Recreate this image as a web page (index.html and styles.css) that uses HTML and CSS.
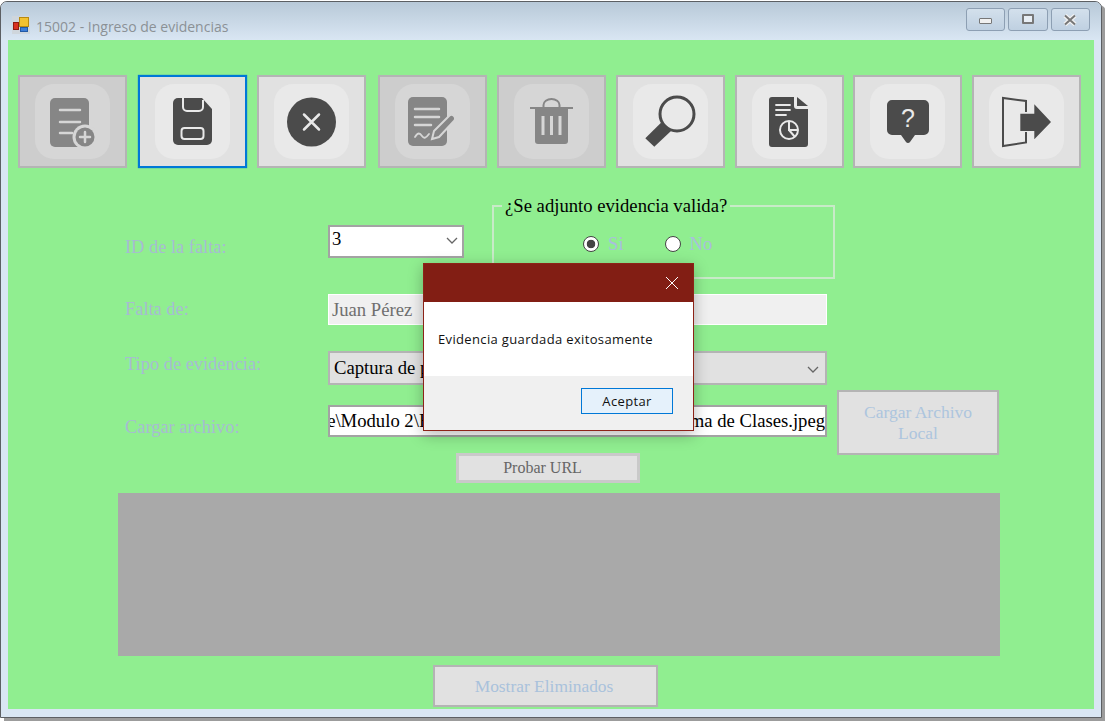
FILE: index.html
```html
<!DOCTYPE html>
<html lang="es">
  <head>
    <meta charset="UTF-8" />
    <title>15002 - Ingreso de evidencias</title>
    <link rel="stylesheet" href="styles.css">
  </head>
  <body>
    <div class="window">
      <div class="titlebar">
        <svg class="app-icon" width="18" height="18" viewBox="0 0 18 18">
          <rect x="0" y="0" width="18" height="18" fill="#cfd6dc" />
          <rect x="7.500" y="1.500" width="9" height="9" fill="#f2c230" stroke="#b98a10" />
          <rect x="1.500" y="6.500" width="5" height="7" fill="#d8301f" stroke="#8e1a10" />
          <rect x="8.500" y="11.500" width="7" height="4" fill="#3d7fd8" stroke="#235aa5" />
        </svg>
        <span class="title">15002 - Ingreso de evidencias</span>
        <div class="win-buttons">
          <div class="win-btn"><span class="glyph-min"></span></div>
          <div class="win-btn"><span class="glyph-max"></span></div>
          <div class="win-btn">
            <svg width="14" height="12" viewBox="0 0 14 12"><path d="M2 1.500 L12 10.500 M12 1.500 L2 10.500" stroke="#f2f2f2" stroke-width="4.400" /><path d="M2 1.500 L12 10.500 M12 1.500 L2 10.500" stroke="#777" stroke-width="2" /></svg>
          </div>
        </div>
      </div>

      <div class="client">
        <div class="toolbar">
          <button class="tool off" disabled>
            <svg class="tile" viewBox="0 0 75 75">
              <rect x="15" y="14" width="39" height="49" rx="5" class="ink" />
              <path d="M25 26H45M25 38H45M25 49H37" class="line" />
              <circle cx="50" cy="53" r="12.500" class="paper" />
              <circle cx="50" cy="53" r="9.500" class="ink" />
              <path d="M45 53H55M50 48V58" class="line" />
            </svg>
          </button>
          <button class="tool focus">
            <svg class="tile" viewBox="0 0 75 75">
              <path d="M23 14H47L57 25V56a5 5 0 0 1-5 5H23a5 5 0 0 1-5-5V19a5 5 0 0 1 5-5Z" class="ink" />
              <path d="M28 14V23a4 4 0 0 0 4 4H44a4 4 0 0 0 4-4V16" class="outline" />
              <rect x="26.500" y="44" width="22" height="11" rx="3" class="outline" />
            </svg>
          </button>
          <button class="tool">
            <svg class="tile" viewBox="0 0 75 75">
              <circle cx="37.500" cy="38" r="24.500" class="ink" />
              <path d="M30 30.500L45 45.500M45 30.500L30 45.500" class="line" />
            </svg>
          </button>
          <button class="tool off">
            <svg class="tile" viewBox="0 0 75 75">
              <rect x="13" y="13" width="39" height="49" rx="5" class="ink" />
              <path d="M20 25H44M20 33H44M20 41H36" class="line" />
              <path d="M20 53C23 48 25 49 27 52S31 54 34 50" class="line thin" />
              <path d="M39 47L54 32a3.500 3.500 0 0 1 5 5L44 53L37 55Z" class="ink outline-fill" />
            </svg>
          </button>
          <button class="tool off">
            <svg class="tile" viewBox="0 0 75 75">
              <path d="M29.500 24V21a8 6 0 0 1 16 0V24" class="outline dark" />
              <path d="M16 24H59" class="outline dark" />
              <path d="M21 25H54V57a3 3 0 0 1-3 3H24a3 3 0 0 1-3-3Z" class="ink" />
              <path d="M29 32V51M37.500 32V51M46 32V51" class="line flat" />
            </svg>
          </button>
          <button class="tool">
            <svg class="tile" viewBox="0 0 75 75">
              <circle cx="44" cy="30" r="17" class="outline dark wide" />
              <path d="M12.300 54.300L21.300 62.700L38 47L28 38.700Z" class="ink" />
            </svg>
          </button>
          <button class="tool">
            <svg class="tile" viewBox="0 0 75 75">
              <path d="M20 13H42V22a3 3 0 0 0 3 3H56V60a3 3 0 0 1-3 3H20a3 3 0 0 1-3-3V16a3 3 0 0 1 3-3Z" class="ink" />
              <path d="M45 13L56 22H45Z" class="ink" />
              <path d="M24 21H38M24 26H38M24 31H34" class="line thin" />
              <circle cx="37" cy="46" r="9" class="outline" />
              <path d="M37 37V46H46M37 46L43 53" class="outline" />
            </svg>
          </button>
          <button class="tool">
            <svg class="tile" viewBox="0 0 75 75">
              <path d="M22 16H54a5 5 0 0 1 5 5V46a5 5 0 0 1-5 5H45L40 58a2.500 2.500 0 0 1-4 0L31 51H22a5 5 0 0 1-5-5V21a5 5 0 0 1 5-5Z" class="ink" />
              <text x="38" y="43" class="help-mark">?</text>
            </svg>
          </button>
          <button class="tool">
            <svg class="tile" viewBox="0 0 75 75">
              <path d="M37 28V17L14 14V62L37 58.500V48" class="outline dark" />
              <path d="M31.300 29.700H45.300V20.300L62 38L45.300 55.300V47H31.300Z" class="ink" />
            </svg>
          </button>
        </div>

        <div class="row row-id">
          <label class="field-label label-id">ID de la falta:</label>
          <div class="combo combo-id"><span>3</span>
            <svg class="chevron" width="12" height="7" viewBox="0 0 12 7"><path d="M1 1L6 6L11 1" /></svg>
          </div>
          <fieldset class="valid-box">
            <legend>¿Se adjunto evidencia valida?</legend>
            <div class="radios">
              <label class="radio"><input type="radio" name="valida" checked />Si</label>
              <label class="radio"><input type="radio" name="valida" />No</label>
            </div>
          </fieldset>
        </div>

        <div class="row row-name">
          <label class="field-label">Falta de:</label>
          <div class="readonly">Juan Pérez</div>
        </div>

        <div class="row row-type">
          <label class="field-label label-type">Tipo de evidencia:</label>
          <div class="combo combo-type"><span>Captura de pantalla</span>
            <svg class="chevron" width="12" height="7" viewBox="0 0 12 7"><path d="M1 1L6 6L11 1" /></svg>
          </div>
        </div>

        <div class="file-block">
          <div class="file-left">
            <div class="row row-file">
              <label class="field-label label-file">Cargar archivo:</label>
              <div class="path"><span>e\Modulo 2\Evidencia grafica semana 02\Diagrama de Clases.jpeg</span></div>
            </div>
            <button class="btn-test">Probar URL</button>
          </div>
          <button class="btn-load" disabled>Cargar Archivo Local</button>
        </div>

        <div class="preview"></div>

        <button class="btn-deleted" disabled>Mostrar Eliminados</button>
      </div>

      <div class="dialog">
        <div class="dialog-head">
          <svg width="14" height="14" viewBox="0 0 14 14"><path d="M1 1L13 13M13 1L1 13" /></svg>
        </div>
        <div class="dialog-body">Evidencia guardada exitosamente</div>
        <div class="dialog-foot"><button class="btn-ok">Aceptar</button></div>
      </div>
    </div>
  </body>
</html>
```

FILE: styles.css
```css
html,
body {
  margin: 0;
  height: 100%;
  background-color: #fff;
  overflow: hidden;
}

body {
  font-family: "Liberation Serif", serif;
  font-size: 18.670px;
}

.window {
  position: relative;
  box-sizing: border-box;
  width: 1102px;
  height: 717px;
  margin-top: 1px;
  padding: 0 7px 0 7px;
  background-color: #d9e6f3;
  border: 1px solid #5c5f63;
  border-radius: 7px 7px 0 0;
  box-shadow: 4px 4px 0 #9c9c9c;
}

/* title bar */
.titlebar {
  display: flex;
  align-items: center;
  box-sizing: border-box;
  height: 38px;
  margin: 0 -7px;
  padding: 10px 11px 0 11px;
  background: linear-gradient(#b8c9d8, #d9e6f3);
  border-radius: 6px 6px 0 0;
}
.app-icon {
  margin-top: -2px;
}
.title {
  margin-left: 6px;
  font-family: "Open Sans", sans-serif;
  font-size: 14px;
  color: #8b9196;
}
.win-buttons {
  display: flex;
  gap: 3px;
  margin-left: auto;
  margin-top: -13px;
}
.win-btn {
  display: flex;
  align-items: center;
  justify-content: center;
  box-sizing: border-box;
  width: 39.300px;
  height: 23px;
  background: linear-gradient(#d3e0ec, #bfd0e1);
  border: 1px solid #8d9fb3;
  border-radius: 3px;
}
.glyph-min {
  box-sizing: border-box;
  width: 13px;
  height: 6px;
  margin-top: 3px;
  background-color: #f0f0f0;
  border: 1px solid #777;
  border-radius: 1px;
}
.glyph-max {
  box-sizing: border-box;
  width: 12px;
  height: 10px;
  margin-top: -2px;
  background-color: #e8eef4;
  border: 2px solid #777;
  border-radius: 1px;
}

/* client area */
.client {
  box-sizing: border-box;
  height: 669px;
  padding-top: 35px;
  background-color: #90ee90;
}

.toolbar {
  display: flex;
  padding-left: 10px;
  gap: 10px;
}
.tool {
  display: flex;
  align-items: center;
  justify-content: center;
  box-sizing: border-box;
  width: 109px;
  height: 93px;
  padding: 0;
  background-color: #e1e1e1;
  border: 2px solid #b4b4b4;
  --tile: #e9e9e9;
  --ink: #4b4b4b;
}
.tool:nth-child(2) {
  margin-left: 1px;
}
.tool:nth-child(4) {
  margin-left: 2px;
}
.tool:nth-child(8) {
  margin-left: -1px;
}
.tool.off {
  background-color: #cdcdcd;
  --tile: #d6d6d6;
  --ink: #868686;
}
.tool.focus {
  border: 2px solid #0078d7;
  box-shadow: 0 0 1px #0078d7;
}
.tile {
  flex-shrink: 0;
  width: 75px;
  height: 75px;
  background-color: var(--tile);
  border-radius: 19px;
}
.ink {
  fill: var(--ink);
}
.paper {
  fill: var(--tile);
}
.line {
  fill: none;
  stroke: var(--tile);
  stroke-width: 2.500px;
  stroke-linecap: round;
}
.line.thin {
  stroke-width: 1.800px;
}
.line.flat {
  stroke-width: 3px;
  stroke-linecap: butt;
}
.outline {
  fill: none;
  stroke: var(--tile);
  stroke-width: 2px;
}
.outline.dark {
  stroke: var(--ink);
}
.outline.wide {
  stroke-width: 3px;
}
.outline-fill {
  stroke: var(--tile);
  stroke-width: 2px;
}
.help-mark {
  font-family: "Liberation Sans", sans-serif;
  font-size: 25px;
  fill: var(--tile);
  text-anchor: middle;
}

/* form rows */
.row {
  display: flex;
  align-items: flex-start;
}
.row-id {
  margin-top: 27px;
  padding-left: 117px;
}
.row-name {
  margin-top: 15px;
  padding-left: 117px;
}
.row-type {
  margin-top: 26px;
  padding-left: 117px;
}
.row-file {
  padding-top: 15px;
  padding-left: 117px;
}

.field-label {
  width: 203px;
  flex-shrink: 0;
  font-size: 18.400px;
  line-height: 31px;
  color: #a7bbd3;
}
.label-id {
  margin-top: 37px;
}
.label-type {
  margin-top: -2px;
}
.label-file {
  margin: 7px 0 -7px;
}

.combo {
  display: flex;
  align-items: center;
  justify-content: space-between;
  box-sizing: border-box;
  color: #000;
  border: 2px solid #a3a3a3;
}
.combo span {
  white-space: nowrap;
}
.combo-id {
  width: 136px;
  height: 33px;
  margin-top: 30px;
  padding: 0 4px 5px 2px;
  background-color: #fff;
}
.combo-type {
  width: 499px;
  height: 34px;
  padding: 0 6px 0 4px;
  background-color: #e1e1e1;
  border-color: #b4b4b4;
}
.chevron {
  flex-shrink: 0;
  margin-top: 3px;
  fill: none;
  stroke: #666;
  stroke-width: 1.300px;
}

.valid-box {
  box-sizing: border-box;
  width: 343px;
  height: 84px;
  margin: 0 0 0 28px;
  padding: 0;
  border: 2px solid #c8eac8;
}
.valid-box legend {
  margin-left: 8px;
  padding: 0 3px;
  color: #000;
}
.radios {
  display: flex;
  gap: 41px;
  padding: 16px 0 0 89px;
}
.radio {
  display: flex;
  align-items: center;
  gap: 9px;
  color: #a9bfdc;
}
.radio input {
  appearance: none;
  box-sizing: border-box;
  width: 16px;
  height: 16px;
  margin: 0;
  background-color: #fff;
  border: 1px solid #444;
  border-radius: 50%;
}
.radio input:checked {
  background: radial-gradient(circle, #444 0 4px, #fff 4.600px);
}

.readonly {
  box-sizing: border-box;
  width: 499px;
  height: 31px;
  padding: 2px 3px;
  line-height: 25px;
  color: #6f6f6f;
  background-color: #f0f0f0;
  border: 1px solid #fff;
}

.file-block {
  display: flex;
  align-items: flex-start;
  margin-top: 5px;
}
.file-left {
  display: flex;
  flex-direction: column;
  width: 829px;
}
.path {
  display: flex;
  justify-content: flex-end;
  box-sizing: border-box;
  width: 499px;
  height: 32px;
  overflow: hidden;
  line-height: 28px;
  background-color: #fff;
  border: 2px solid #a3a3a3;
}
.path span {
  flex-shrink: 0;
  white-space: nowrap;
}

button {
  font-family: "Liberation Serif", serif;
}
.btn-test {
  box-sizing: border-box;
  width: 184px;
  height: 30px;
  margin: 16px 0 0 448px;
  padding: 0 11px 0 0;
  font-size: 16px;
  color: #666;
  background-color: #e1e1e1;
  border: 3px solid #c9c9c9;
}
.btn-load {
  box-sizing: border-box;
  width: 162px;
  height: 65px;
  padding: 0 24px;
  font-size: 17.500px;
  color: #adc5de;
  background-color: #e1e1e1;
  border: 2px solid #b4b4b4;
}

.preview {
  width: 882px;
  height: 163px;
  margin: 10px 0 0 110px;
  background-color: #a9a9a9;
}

.btn-deleted {
  display: block;
  box-sizing: border-box;
  width: 225px;
  height: 42px;
  margin: 9px 0 0 425px;
  padding: 0 3px 0 0;
  font-size: 17.400px;
  color: #a9c1dc;
  background-color: #e1e1e1;
  border: 2px solid #b4b4b4;
}

/* message box, sits over the form */
.dialog {
  position: absolute;
  left: 422px;
  top: 261px;
  box-sizing: border-box;
  display: flex;
  flex-direction: column;
  width: 271px;
  height: 168px;
  background-color: #fff;
  border: 1px solid #8d2318;
  box-shadow: 0 4px 14px rgba(0, 0, 0, 0.28);
}
.dialog-head {
  display: flex;
  align-items: center;
  justify-content: flex-end;
  height: 38px;
  padding-right: 14px;
  background-color: #821e14;
}
.dialog-head svg {
  stroke: #fff;
  stroke-width: 1;
  fill: none;
}
.dialog-body {
  flex: 1;
  padding: 28px 0 0 14px;
  font-family: "Open Sans", sans-serif;
  font-size: 13px;
  letter-spacing: 0.350px;
  color: #111;
}
.dialog-foot {
  display: flex;
  justify-content: flex-end;
  height: 54px;
  padding: 12px 20px 0 0;
  box-sizing: border-box;
  background-color: #f0f0f0;
}
.btn-ok {
  box-sizing: border-box;
  width: 92px;
  height: 26px;
  padding: 0;
  font-family: "Open Sans", sans-serif;
  font-size: 13px;
  letter-spacing: 0.350px;
  color: #111;
  background-color: #e5f1fb;
  border: 1px solid #0078d7;
}
```
